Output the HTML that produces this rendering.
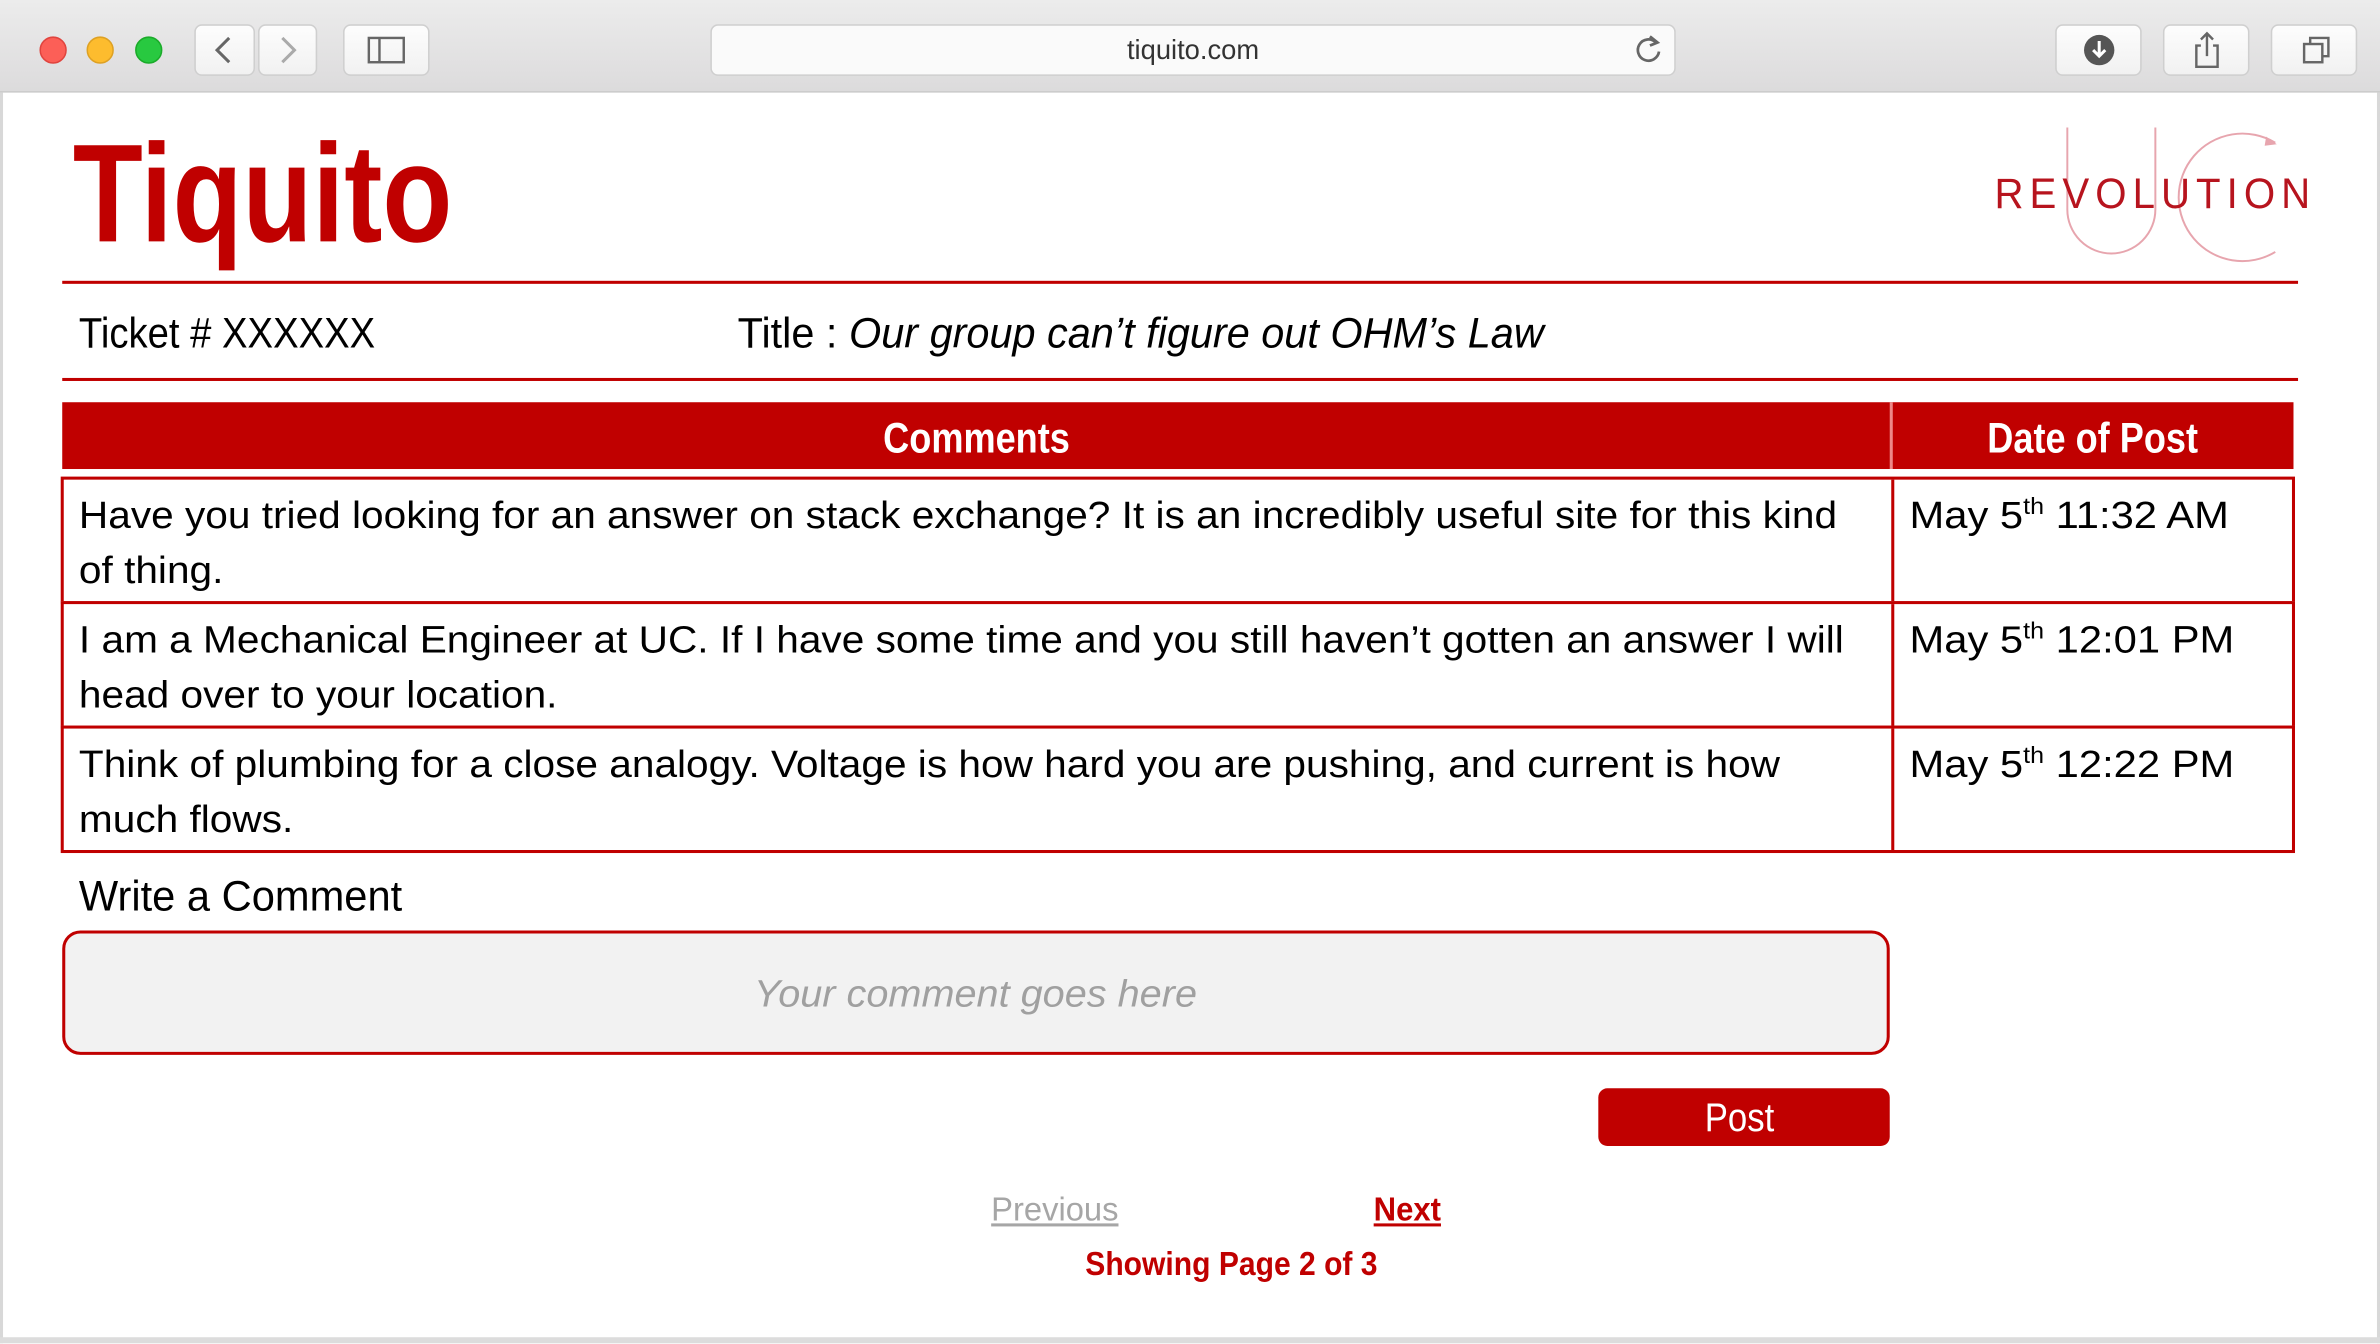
<!DOCTYPE html>
<html><head><meta charset="utf-8">
<style>
html,body{margin:0;padding:0;width:2380px;height:1344px;overflow:hidden;background:#fff}
#w{position:absolute;left:0;top:0;width:1568px;height:885px;transform:scale(1.51786);transform-origin:0 0;font-family:"Liberation Sans",sans-serif;background:#fff}
.a{position:absolute}
.sx{display:inline-block;transform-origin:0 50%;white-space:nowrap}
.btn{position:absolute;top:16px;height:34px;background:linear-gradient(#fdfdfd,#f1f1f1);border:1px solid #cfcfcf;border-radius:5px;box-sizing:border-box}
.red{color:#c00000}
.row{position:absolute;left:40px;width:1472px;border:2px solid #c00000;box-sizing:border-box;background:#fff}
.row .c1{position:absolute;left:10px;top:6px;font-size:25px;line-height:36px;color:#000;white-space:nowrap}
.row .c2{position:absolute;left:1216px;top:6px;font-size:25px;line-height:36px;white-space:nowrap}
.row .dv{position:absolute;left:1204px;top:0;bottom:0;width:2px;background:#c00000}
sup{font-size:15px;line-height:0}
</style></head><body>
<div id="w">
<div class="a" style="left:0;top:0;width:1568px;height:61px;background:linear-gradient(#ececec,#dcdbdc);border-bottom:1px solid #c8c8c8;box-sizing:border-box"></div>
<div class="a" style="left:26px;top:24px;width:18px;height:18px;border-radius:50%;background:#fc5f57;border:1px solid #e0443e;box-sizing:border-box"></div>
<div class="a" style="left:57px;top:24px;width:18px;height:18px;border-radius:50%;background:#fdbc2e;border:1px solid #dea123;box-sizing:border-box"></div>
<div class="a" style="left:89px;top:24px;width:18px;height:18px;border-radius:50%;background:#28c940;border:1px solid #1aab29;box-sizing:border-box"></div>
<div class="btn" style="left:128px;width:40px"><svg width="40" height="34" style="position:absolute;left:-1px;top:-1px"><path d="M23 9 L15 17 L23 25" fill="none" stroke="#666" stroke-width="2"/></svg></div>
<div class="btn" style="left:170px;width:39px"><svg width="40" height="34" style="position:absolute;left:-1px;top:-1px"><path d="M16 9 L24 17 L16 25" fill="none" stroke="#aaa" stroke-width="2"/></svg></div>
<div class="btn" style="left:226px;width:57px"><svg width="57" height="34" style="position:absolute;left:-1px;top:-1px"><rect x="17" y="9" width="23" height="16" fill="none" stroke="#666" stroke-width="1.6"/><line x1="24" y1="9" x2="24" y2="25" stroke="#666" stroke-width="1.6"/></svg></div>
<div class="btn" style="left:468px;width:636px;background:#fafafa"><span class="a" style="left:0;right:0;top:6px;text-align:center;font-size:18px;color:#333">tiquito.com</span><svg width="30" height="34" style="position:absolute;left:602px;top:-1px"><path d="M20 12 A7 7 0 1 0 22 18" fill="none" stroke="#666" stroke-width="1.8"/><path d="M16 8 L21 12 L16 14" fill="none" stroke="#666" stroke-width="1.8"/></svg></div>
<div class="btn" style="left:1354px;width:57px"><svg width="57" height="34" style="position:absolute;left:-1px;top:-1px"><circle cx="29" cy="17" r="10" fill="#555"/><path d="M29 11 V21 M25 17 L29 21 L33 17" fill="none" stroke="#fff" stroke-width="2"/></svg></div>
<div class="btn" style="left:1425px;width:57px"><svg width="57" height="34" style="position:absolute;left:-1px;top:-1px"><path d="M25 14 H22 V28 H36 V14 H33" fill="none" stroke="#666" stroke-width="1.6"/><path d="M29 6 V21 M25 10 L29 6 L33 10" fill="none" stroke="#666" stroke-width="1.6"/></svg></div>
<div class="btn" style="left:1496px;width:57px"><svg width="57" height="34" style="position:absolute;left:-1px;top:-1px"><rect x="22" y="13" width="12" height="12" fill="none" stroke="#666" stroke-width="1.6"/><path d="M26 13 V9 H38 V21 H34" fill="none" stroke="#666" stroke-width="1.6"/></svg></div>
<div class="a" style="left:0;top:61px;width:2px;height:824px;background:#d8d8d8"></div>
<div class="a" style="left:1566px;top:61px;width:2px;height:824px;background:#d8d8d8"></div>
<div class="a" style="left:0;top:881px;width:1568px;height:4px;background:#dcdcdc"></div>

<div class="a red" style="left:48px;top:78px;font-size:92px;font-weight:bold;line-height:100px"><span class="sx" style="transform:scaleX(0.82)">Tiquito</span></div>
<svg class="a" style="left:1300px;top:80px" width="240" height="100">
<path d="M62 4 V58 A29 29 0 0 0 120 58 V4" fill="none" stroke="#e7a5ae" stroke-width="1.3"/>
<path d="M199 14 A42 42 0 1 0 199 86" fill="none" stroke="#e7a5ae" stroke-width="1.3"/>
<path d="M193 10 L200 15 L192 16" fill="#e7a5ae"/>
<text x="14" y="57" font-family="Liberation Sans,sans-serif" font-size="28" fill="#b7141e" letter-spacing="4.2" textLength="212" lengthAdjust="spacingAndGlyphs">REVOLUTION</text>
</svg>
<div class="a" style="left:41px;top:185px;width:1473px;height:2px;background:#c00000"></div>
<div class="a" style="left:52px;top:202px;font-size:28px;line-height:36px;color:#000"><span class="sx" style="transform:scaleX(0.9)">Ticket # XXXXXX</span></div>
<div class="a" style="left:486px;top:202px;font-size:28px;line-height:36px;color:#000"><span class="sx" style="transform:scaleX(0.975)">Title : <i>Our group can’t figure out OHM’s Law</i></span></div>
<div class="a" style="left:41px;top:249px;width:1473px;height:2px;background:#c00000"></div>

<div class="a" style="left:41px;top:265px;width:1470px;height:44px;background:#c00000"></div>
<div class="a" style="left:1245px;top:265px;width:2px;height:44px;background:#e88"></div>
<div class="a" style="left:41px;top:271px;width:1204px;text-align:center;color:#fff;font-size:28px;font-weight:bold;line-height:36px"><span class="sx" style="transform:scaleX(0.85);transform-origin:50% 50%">Comments</span></div>
<div class="a" style="left:1247px;top:271px;width:264px;text-align:center;color:#fff;font-size:28px;font-weight:bold;line-height:36px"><span class="sx" style="transform:scaleX(0.85);transform-origin:50% 50%">Date of Post</span></div>

<div class="row" style="top:314px;height:84px"><div class="dv"></div>
<div class="c1"><span class="sx" style="transform:scaleX(1.07)">Have you tried looking for an answer on stack exchange? It is an incredibly useful site for this kind<br>of thing.</span></div>
<div class="c2"><span class="sx" style="transform:scaleX(1.1)">May 5<sup>th</sup> 11:32 AM</span></div></div>
<div class="row" style="top:396px;height:84px"><div class="dv"></div>
<div class="c1"><span class="sx" style="transform:scaleX(1.07)">I am a Mechanical Engineer at UC. If I have some time and you still haven’t gotten an answer I will<br>head over to your location.</span></div>
<div class="c2"><span class="sx" style="transform:scaleX(1.1)">May 5<sup>th</sup> 12:01 PM</span></div></div>
<div class="row" style="top:478px;height:84px"><div class="dv"></div>
<div class="c1"><span class="sx" style="transform:scaleX(1.07)">Think of plumbing for a close analogy. Voltage is how hard you are pushing, and current is how<br>much flows.</span></div>
<div class="c2"><span class="sx" style="transform:scaleX(1.1)">May 5<sup>th</sup> 12:22 PM</span></div></div>

<div class="a" style="left:52px;top:573px;font-size:28px;line-height:36px;color:#000"><span class="sx" style="transform:scaleX(0.98)">Write a Comment</span></div>
<div class="a" style="left:41px;top:613px;width:1204px;height:82px;background:#f2f2f2;border:2px solid #c00000;border-radius:12px;box-sizing:border-box"></div>
<div class="a" style="left:41px;top:637px;width:1204px;text-align:center;font-size:25px;line-height:36px;color:#a0a0a0;font-style:italic"><span class="sx" style="transform:scaleX(1.045);transform-origin:50% 50%">Your comment goes here</span></div>
<div class="a" style="left:1053px;top:717px;width:192px;height:38px;background:#c00000;border-radius:6px"></div>
<div class="a" style="left:1050px;top:719px;width:192px;text-align:center;color:#fff;font-size:26px;line-height:34px"><span class="sx" style="transform:scaleX(0.88);transform-origin:50% 50%">Post</span></div>

<div class="a" style="left:653px;top:783px;font-size:22px;line-height:28px;color:#a6a6a6"><span class="sx" style="transform:scaleX(0.98);text-decoration:underline">Previous</span></div>
<div class="a red" style="left:905px;top:783px;font-size:22px;line-height:28px;font-weight:bold"><span class="sx" style="transform:scaleX(0.93);text-decoration:underline">Next</span></div>
<div class="a red" style="left:715px;top:819px;font-size:22px;line-height:28px;font-weight:bold"><span class="sx" style="transform:scaleX(0.9)">Showing Page 2 of 3</span></div>
</div>
</body></html>
